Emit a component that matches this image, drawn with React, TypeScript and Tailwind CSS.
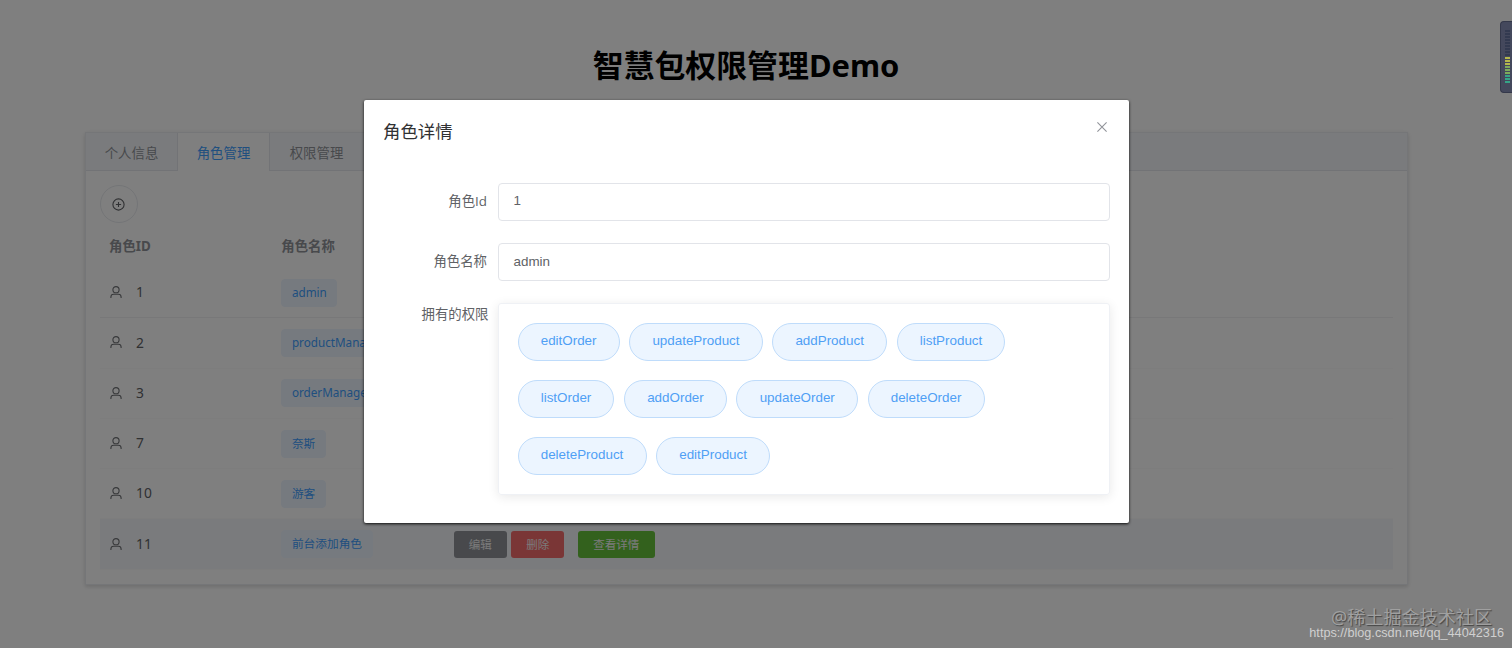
import clsx from 'clsx'

type Role = {
    id: number
    name: string
}

const tabs = ['个人信息', '角色管理', '权限管理']

const roles: Role[] = [
    { id: 1, name: 'admin' },
    { id: 2, name: 'productManager' },
    { id: 3, name: 'orderManager' },
    { id: 7, name: '奈斯' },
    { id: 10, name: '游客' },
    { id: 11, name: '前台添加角色' },
]

const permissions = [
    ['editOrder', 'updateProduct', 'addProduct', 'listProduct'],
    ['listOrder', 'addOrder', 'updateOrder', 'deleteOrder'],
    ['deleteProduct', 'editProduct'],
]

const UserIcon = () => (
    <svg width="12" height="13" viewBox="0 0 12 13" fill="none" stroke="#6f7175" strokeWidth="1.1">
        <circle cx="6" cy="3.7" r="3.1" />
        <path d="M.9 11.9v-.8c0-1.7 1.1-2.9 2.7-2.9h4.8c1.6 0 2.7 1.2 2.7 2.9v.8" />
    </svg>
)

const PlusIcon = () => (
    <svg width="13" height="13" viewBox="0 0 13 13" fill="none" stroke="#606266" strokeWidth="1.1">
        <circle cx="6.5" cy="6.5" r="5.6" />
        <path d="M6.5 3.9v5.2M3.9 6.5h5.2" />
    </svg>
)

function RoleRow({ role, active }: { role: Role; active: boolean }) {
    return (
        <div
            className={clsx(
                'grid h-[50.3px] grid-cols-[171.8px_172.5px_1fr] items-center border-b pl-[9.5px]',
                role.id === 1 ? 'border-[#f0f0f2]' : 'border-[#fafafb]',
                active && 'bg-[#f5f7fa]'
            )}
        >
            <div className="flex items-center text-[13.8px] text-[#606266]">
                <UserIcon />
                <span className="ml-[14.5px]">{role.id}</span>
            </div>
            <div className="flex">
                <span className="flex h-[28px] items-center whitespace-nowrap rounded-[4px] border border-[#ecf5ff] bg-[#ecf5ff] px-[9.6px] text-[11.7px] text-[#409eff]">
                    {role.name}
                </span>
            </div>
            {active && (
                <div className="flex text-[11.5px] text-[#f4f4f4]">
                    <button className="h-[27px] w-[53px] rounded-[3px] bg-[#909399]">编辑</button>
                    <button className="ml-[4.5px] h-[27px] w-[53px] rounded-[3px] bg-[#f56c6c]">删除</button>
                    <button className="ml-[13.5px] h-[27px] w-[77px] rounded-[3px] bg-[#67c23a]">查看详情</button>
                </div>
            )}
        </div>
    )
}

function RoleDialog() {
    return (
        <div className="h-[423.5px] w-[765px] rounded-[2px] bg-white px-[19px] pt-[18px] shadow-[0_1px_3px_rgba(0,0,0,0.9)]">
            <div className="flex justify-between">
                <h2 className="text-[17.4px] leading-[26px] text-[#303133]">角色详情</h2>
                <svg className="mr-[3px] mt-[4.5px]" width="10" height="10" viewBox="0 0 10 10" stroke="#909399" strokeWidth="1.1">
                    <path d="M.4.4l9.2 9.2M9.6.4L.4 9.6" />
                </svg>
            </div>

            <div className="mt-[39px] flex flex-col text-[13.4px] text-[#606266]">
                <div className="flex h-[38px]">
                    <label className="w-[115px] pr-[11px] text-right leading-[36px]">
                        角色<span className="font-['Open_Sans',sans-serif]">Id</span>
                    </label>
                    <div className="flex flex-1 items-center rounded-[4px] border border-[#e2e4e9] px-[14.5px] font-['Liberation_Sans',sans-serif]">
                        1
                    </div>
                </div>
                <div className="mt-[22.5px] flex h-[38px]">
                    <label className="w-[115px] pr-[11px] text-right leading-[36px]">角色名称</label>
                    <div className="flex flex-1 items-center rounded-[4px] border border-[#e2e4e9] px-[14.5px] font-['Liberation_Sans',sans-serif]">
                        admin
                    </div>
                </div>
                <div className="mt-[22px] flex h-[191.5px]">
                    <label className="w-[115px] pr-[9.5px] text-right leading-[22px]">拥有的权限</label>
                    <div className="flex flex-1 flex-col gap-[19px] rounded-[3px] border border-[#eff1f5] pl-[18.5px] pt-[18.5px] shadow-[0_2px_11px_rgba(0,0,0,0.09)]">
                        {permissions.map((row, i) => (
                            <div key={i} className="flex gap-[9.5px]">
                                {row.map((name) => (
                                    <span
                                        key={name}
                                        className="flex h-[38px] items-center rounded-full border border-[#bfdcfb] bg-[#ecf5ff] px-[22.2px] font-['Liberation_Sans',sans-serif] text-[#4f9ff5]"
                                    >
                                        {name}
                                    </span>
                                ))}
                            </div>
                        ))}
                    </div>
                </div>
            </div>
        </div>
    )
}

function LevelMeter() {
    return (
        <div className="absolute right-0 top-[21px] flex h-[72px] w-[12px] flex-col items-center gap-px rounded-l-[4px] border border-r-0 border-[#34384a] bg-[#44485c] pl-[2px] pt-[8px]">
            {Array.from({ length: 18 }, (_, i) => (
                <div
                    key={i}
                    className={clsx(
                        'h-[2px] w-[5px] shrink-0',
                        i < 9 ? 'bg-[#333a50]' : i < 12 ? 'bg-[#b5b84c]' : i < 15 ? 'bg-[#7cab5a]' : 'bg-[#35a487]'
                    )}
                />
            ))}
        </div>
    )
}

export default function App() {
    return (
        <div className="relative h-[648px] w-[1512px] overflow-hidden bg-white font-['Noto_Sans','Noto_Sans_CJK_SC',sans-serif]">
            <main className="pl-[85px] pt-[43px]">
                <h1 className="w-[1322px] text-center text-[30.9px] font-bold leading-[44px] text-black">智慧包权限管理Demo</h1>

                <section className="mt-[45px] h-[453px] w-[1323px] border border-[#ebedf0] shadow-[0_2px_4px_rgba(0,0,0,0.12),0_0_6px_rgba(0,0,0,0.04)]">
                    <nav className="flex h-[38px] border-b border-[#e4e7ed] bg-[#f5f7fa] text-[13.4px]">
                        {tabs.map((tab, i) => (
                            <div
                                key={tab}
                                className={clsx(
                                    'flex h-[38px] items-center justify-center pt-[2px]',
                                    i === 0 ? 'w-[91px]' : 'w-[93px]',
                                    i === 1 ? 'border-x border-[#e4e7ed] bg-white text-[#409eff]' : 'text-[#909399]'
                                )}
                            >
                                {tab}
                            </div>
                        ))}
                    </nav>
                    <div className="px-[14px] pt-[14px]">
                        <button className="flex h-[38px] w-[38px] items-center justify-center rounded-full border border-[#e8eaee] pr-px">
                            <PlusIcon />
                        </button>
                        <div className="grid h-[45px] grid-cols-[172.3px_1fr] items-center pl-[9px] pt-px text-[13.4px] font-bold text-[#909399]">
                            <span>角色ID</span>
                            <span>角色名称</span>
                        </div>
                        {roles.map((role) => (
                            <RoleRow key={role.id} role={role} active={role.id === 11} />
                        ))}
                    </div>
                </section>
            </main>

            <div className="absolute inset-0 flex items-start justify-center bg-black/50 pr-[19px] pt-[99.5px]">
                <RoleDialog />
            </div>

            <LevelMeter />

            <div className="absolute right-[8px] top-[605px] flex flex-col items-end whitespace-nowrap">
                <span className="mr-[12px] text-[18.1px] leading-[24px] text-[#a0a0a0] [text-shadow:1px_1px_1px_#444]">@稀土掘金技术社区</span>
                <span className="-mt-[4px] font-['Liberation_Sans',sans-serif] text-[12.7px] leading-[16px] text-[#d0d0d0]">
                    https://blog.csdn.net/qq_44042316
                </span>
            </div>
        </div>
    )
}
